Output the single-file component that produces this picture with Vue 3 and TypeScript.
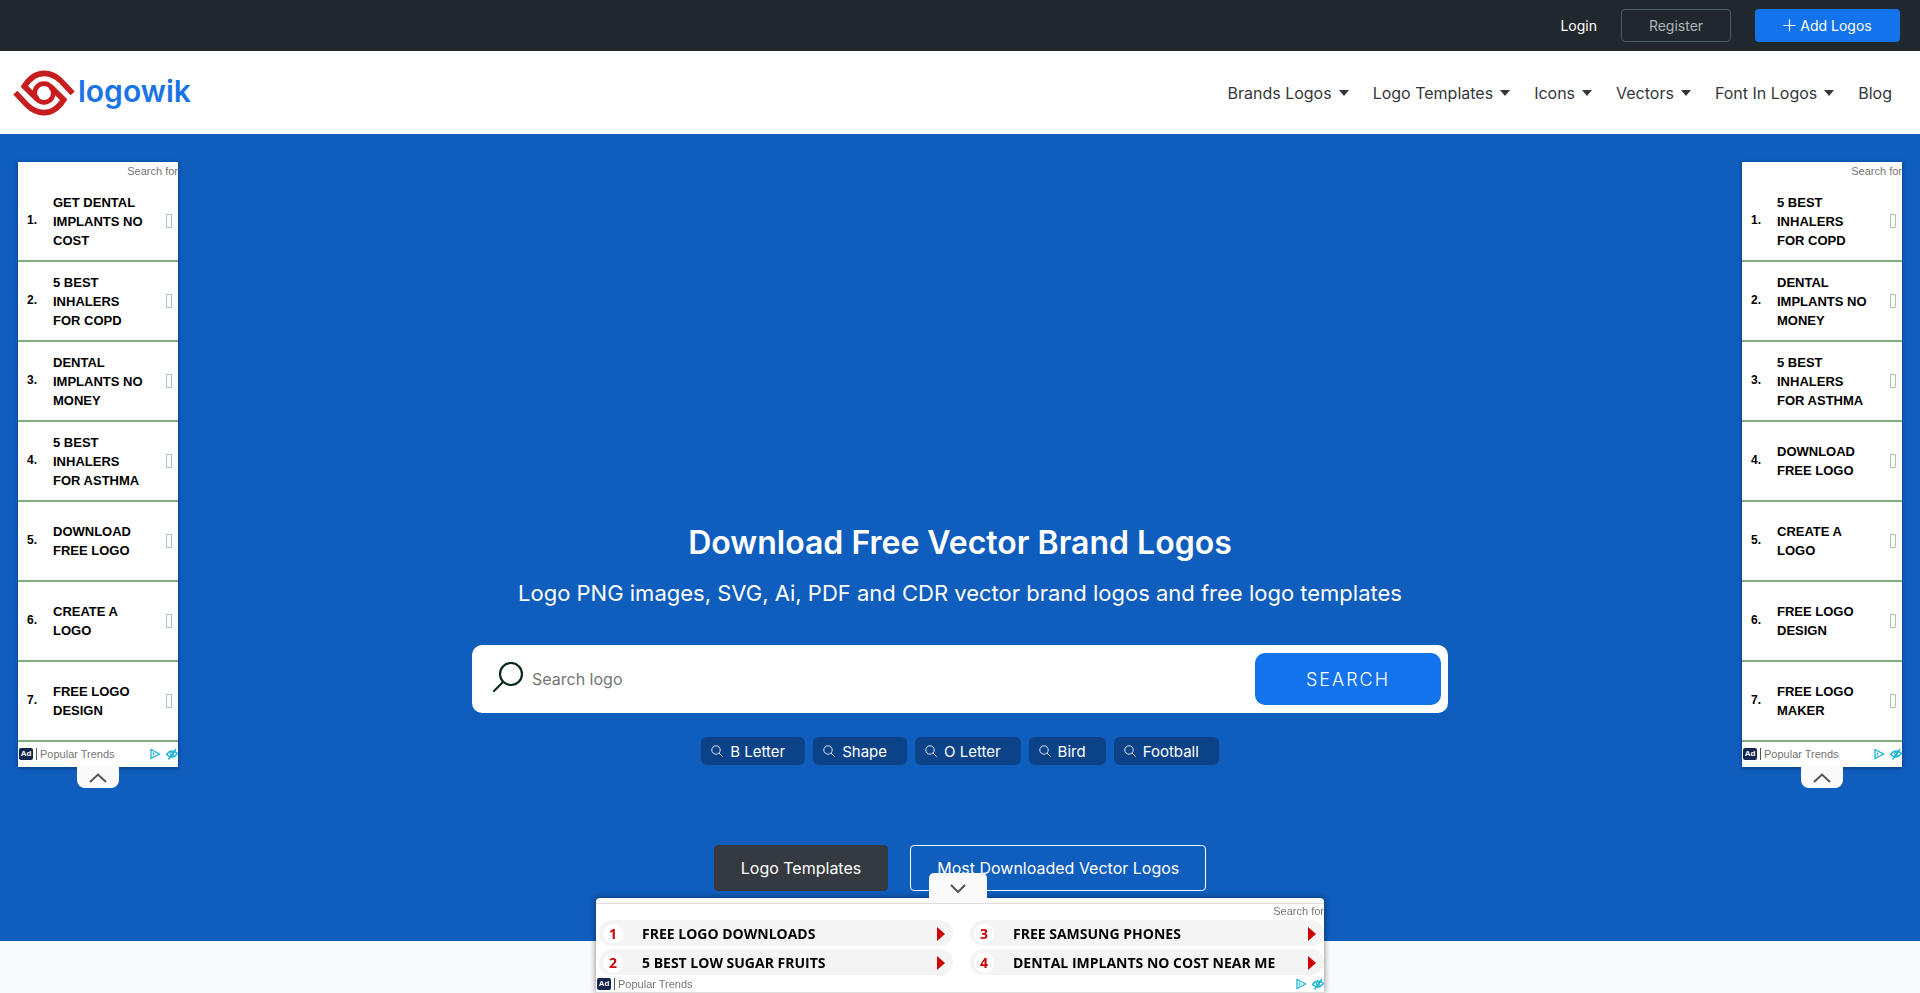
<script setup lang="ts">
interface MenuEntry {
  label: string
  dropdown: boolean
}

interface SideAd {
  side: string
  items: string[]
}

const menu: MenuEntry[] = [
  { label: 'Brands Logos', dropdown: true },
  { label: 'Logo Templates', dropdown: true },
  { label: 'Icons', dropdown: true },
  { label: 'Vectors', dropdown: true },
  { label: 'Font In Logos', dropdown: true },
  { label: 'Blog', dropdown: false },
]

const tags: string[] = ['B Letter', 'Shape', 'O Letter', 'Bird', 'Football']

const sideAds: SideAd[] = [
  {
    side: 'left',
    items: [
      'Get dental implants no cost',
      '5 best inhalers for COPD',
      'Dental implants no money',
      '5 best inhalers for asthma',
      'Download free logo',
      'Create a logo',
      'Free logo design',
    ],
  },
  {
    side: 'right',
    items: [
      '5 best inhalers for COPD',
      'Dental implants no money',
      '5 best inhalers for asthma',
      'Download free logo',
      'Create a logo',
      'Free logo design',
      'Free logo maker',
    ],
  },
]

const bottomAd: string[] = [
  'Free logo downloads',
  '5 best low sugar fruits',
  'Free Samsung phones',
  'Dental implants no cost near me',
]
</script>

<template>
  <div class="page">
    <div class="topbar">
      <a href="#" class="login">Login</a>
      <a href="#" class="top-btn register">Register</a>
      <a href="#" class="top-btn add">
        <svg width="13" height="13" viewBox="0 0 13 13" aria-hidden="true">
          <path d="M6.5 0.5v12M0.5 6.5h12" stroke="#fff" stroke-width="1.2" />
        </svg>
        Add Logos
      </a>
    </div>

    <header class="header">
      <a href="#" class="brand">
        <svg width="64" height="46" viewBox="0 0 192 138" fill="none" stroke="#c81d1f" stroke-width="17" aria-hidden="true">
          <path d="M76 88 L37 49 Q62 10 96 10 Q124 10 146 32 L182 70" />
          <path d="M116 50 L155 89 Q130 128 96 128 Q68 128 46 106 L10 68" />
          <circle cx="96" cy="69" r="28" stroke-width="14" />
        </svg>
        <span>logowik</span>
      </a>
      <nav class="menu">
        <a v-for="entry in menu" :key="entry.label" href="#">
          {{ entry.label }}<i v-if="entry.dropdown" class="caret"></i>
        </a>
      </nav>
    </header>

    <main class="hero">
      <h1>Download Free Vector Brand Logos</h1>
      <p class="subtitle">Logo PNG images, SVG, Ai, PDF and CDR vector brand logos and free logo templates</p>
      <form class="search" @submit.prevent>
        <label for="query">
          <svg width="32" height="32" viewBox="0 0 32 32" fill="none" stroke="#062b16" stroke-width="2.2" stroke-linecap="round" aria-label="Search">
            <circle cx="19" cy="12" r="11" />
            <path d="M11 20 L2 29" />
          </svg>
        </label>
        <input id="query" type="text" placeholder="Search logo" />
        <button type="submit">SEARCH</button>
      </form>
      <div class="tags">
        <a v-for="tag in tags" :key="tag" href="#">
          <svg width="12" height="12" viewBox="0 0 12 12" fill="none" stroke="#d9e6f7" stroke-width="1" aria-hidden="true">
            <circle cx="5" cy="5" r="4.2" />
            <path d="M8 8 L11.6 11.6" />
          </svg>
          {{ tag }}
        </a>
      </div>
      <div class="actions">
        <a href="#" class="action dark">Logo Templates</a>
        <a href="#" class="action outline">Most Downloaded Vector Logos</a>
      </div>
    </main>

    <aside v-for="ad in sideAds" :key="ad.side" class="side-ad" :class="ad.side">
      <div class="ad-head">Search for</div>
      <ol class="side-list">
        <li v-for="(item, i) in ad.items" :key="item">
          <a href="#">
            <span class="num">{{ i + 1 }}.</span>
            <span class="term">{{ item }}</span>
            <span class="box"></span>
          </a>
        </li>
      </ol>
      <div class="ad-foot">
        <span class="ad-badge">Ad</span>
        <span class="trend">Popular Trends</span>
        <svg class="choices" width="28" height="12" viewBox="0 0 28 12" fill="none" stroke="#19b1d6" aria-hidden="true">
          <path d="M1 1.5 L9.5 6 L1 10.5 Z M3.5 4.5 v3" stroke-width="1.3" />
          <path d="M16.5 6.5 Q21.5 0 27.5 5.5 Q22.5 12 16.5 6.5 Z M18.5 11.5 L26 1" stroke-width="1.3" />
          <circle cx="22" cy="6" r="1.8" />
        </svg>
      </div>
      <button type="button" class="tab" aria-label="Collapse">
        <svg width="18" height="10" viewBox="0 0 18 10" fill="none" stroke="#555" stroke-width="2">
          <path d="M1 9 L9 1.5 L17 9" />
        </svg>
      </button>
    </aside>

    <aside class="bottom-ad">
      <button type="button" class="tab" aria-label="Collapse">
        <svg width="16" height="9" viewBox="0 0 16 9" fill="none" stroke="#555" stroke-width="2">
          <path d="M1 1 L8 8 L15 1" />
        </svg>
      </button>
      <div class="ad-head">Search for</div>
      <ol class="bottom-list">
        <li v-for="(item, i) in bottomAd" :key="item">
          <a href="#">
            <span class="disc">{{ i + 1 }}</span>
            <span class="term">{{ item }}</span>
            <i class="arrow"></i>
          </a>
        </li>
      </ol>
      <div class="ad-foot">
        <span class="ad-badge">Ad</span>
        <span class="trend">Popular Trends</span>
        <svg class="choices" width="28" height="12" viewBox="0 0 28 12" fill="none" stroke="#19b1d6" aria-hidden="true">
          <path d="M1 1.5 L9.5 6 L1 10.5 Z M3.5 4.5 v3" stroke-width="1.3" />
          <path d="M16.5 6.5 Q21.5 0 27.5 5.5 Q22.5 12 16.5 6.5 Z M18.5 11.5 L26 1" stroke-width="1.3" />
          <circle cx="22" cy="6" r="1.8" />
        </svg>
      </div>
    </aside>
  </div>
</template>

<style>
body {
  margin: 0;
}
</style>

<style scoped>
.page {
  min-height: 100vh;
  background: #f8fafb;
  color: #212529;
  font-family: Inter, "Liberation Sans", sans-serif;
  font-size: 16px;
}
.page * {
  box-sizing: border-box;
}
a {
  color: inherit;
  text-decoration: none;
}
ol {
  list-style: none;
  margin: 0;
  padding: 0;
}
.topbar {
  display: flex;
  align-items: center;
  justify-content: flex-end;
  gap: 24px;
  height: 51px;
  padding: 0 20px;
  background: #20282d;
  color: #fff;
  font-size: 14px;
}
.top-btn {
  display: flex;
  align-items: center;
  justify-content: center;
  gap: 4px;
  height: 33px;
  border-radius: 4px;
}
.register {
  width: 110px;
  border: 1px solid #4b5d63;
  color: #aeb5b9;
}
.add {
  width: 145px;
  background: #1273eb;
}
.header {
  display: flex;
  align-items: center;
  justify-content: space-between;
  height: 83px;
  padding: 0 28px 0 12px;
  background: #fff;
}
.brand {
  display: flex;
  align-items: center;
  gap: 2px;
  color: #1b74e4;
  font-size: 30px;
  font-weight: 600;
  line-height: 36px;
}
.brand span {
  padding-bottom: 4px;
}
.menu {
  display: flex;
  gap: 24px;
  color: #33373b;
}
.menu a {
  display: flex;
  align-items: center;
  gap: 7px;
}
.caret {
  border: 5px solid transparent;
  border-top: 6px solid #33373b;
  border-bottom: 0;
}
.hero {
  display: flex;
  flex-direction: column;
  align-items: center;
  min-height: 807px;
  padding-top: 384px;
  background: #0f5dbd;
  color: #fff;
}
h1 {
  margin: 0;
  font-size: 32px;
  font-weight: 600;
  line-height: 50px;
}
.subtitle {
  margin: 8px 0 0;
  font-size: 22px;
  line-height: 34px;
}
.search {
  display: flex;
  align-items: center;
  width: 100%;
  max-width: 976px;
  height: 68px;
  margin-top: 35px;
  padding: 0 7px 0 20px;
  border-radius: 10px;
  background: #fff;
}
.search label {
  padding-bottom: 2px;
}
.search svg {
  display: block;
}
.search input {
  flex: 1;
  min-width: 0;
  padding: 0 8px;
  border: 0;
  outline: 0;
  background: none;
  font: 16px Inter, sans-serif;
}
.search input::placeholder {
  color: #757575;
}
.search button {
  width: 186px;
  height: 52px;
  border: 0;
  border-radius: 10px;
  background: #1273eb;
  color: #fff;
  font: 300 18px Inter, sans-serif;
  letter-spacing: 2px;
}
.tags {
  display: flex;
  gap: 8px;
  margin-top: 24px;
}
.tags a {
  display: flex;
  align-items: center;
  gap: 7px;
  height: 28px;
  padding: 0 20px 0 10px;
  border-radius: 6px;
  background: #0b4288;
  font-size: 15px;
}
.actions {
  display: flex;
  gap: 22px;
  margin-top: 80px;
}
.action {
  padding: 0 26px;
  border: 1px solid #fff;
  border-radius: 4px;
  line-height: 44px;
}
.dark {
  border-color: #343a40;
  background: #343a40;
}
.side-ad {
  position: absolute;
  top: 162px;
  width: 160px;
  background: #fff;
  box-shadow: 0 1px 4px rgba(0, 0, 0, 0.35);
  font-family: "Liberation Sans", sans-serif;
}
.left {
  left: 18px;
}
.right {
  right: 18px;
}
.ad-head {
  color: #757575;
  font: 11px/19px "Liberation Sans", sans-serif;
  text-align: right;
}
.side-ad .ad-head {
  height: 20px;
}
.side-list a {
  display: flex;
  align-items: center;
  height: 80px;
  padding: 0 6px 0 9px;
  border-bottom: 2px solid #82ab82;
  color: #000;
  font-size: 13px;
  font-weight: 700;
  line-height: 19px;
  text-transform: uppercase;
}
.num {
  width: 26px;
  padding-bottom: 1px;
  font-size: 12px;
}
.side-list .term {
  width: 96px;
}
.box {
  width: 6px;
  height: 14px;
  margin-left: auto;
  border: 1px solid #a9c9ad;
}
.ad-foot {
  display: flex;
  align-items: center;
  color: #757575;
  font: 11px/12px "Liberation Sans", sans-serif;
}
.side-ad .ad-foot {
  height: 25px;
  padding: 0 0 1px 1px;
}
.ad-badge {
  width: 14px;
  border-radius: 2px;
  background: #14264f;
  color: #fff;
  font-size: 8px;
  font-weight: 700;
  text-align: center;
}
.trend {
  margin-left: 3px;
  padding-left: 3px;
  border-left: 1px solid #555;
}
.choices {
  margin-left: auto;
}
.tab {
  position: absolute;
  display: flex;
  align-items: center;
  justify-content: center;
  padding: 0;
  border: 0;
  background: #fafafa;
}
.side-ad .tab {
  top: 100%;
  left: 59px;
  width: 42px;
  height: 21px;
  border-radius: 0 0 8px 8px;
}
.bottom-ad {
  position: fixed;
  bottom: 0;
  left: 50%;
  width: 728px;
  height: 95px;
  margin-left: -364px;
  border-top: 5px solid #fafafa;
  border-radius: 4px 4px 0 0;
  background: #fff;
  box-shadow: 0 0 6px rgba(0, 0, 0, 0.5);
}
.bottom-ad .tab {
  bottom: 100%;
  left: 333px;
  width: 58px;
  height: 30px;
  border-radius: 5px 5px 0 0;
}
.bottom-ad .ad-head {
  height: 17px;
  border-top: 1px solid #ddd;
  line-height: 15px;
}
.bottom-list {
  display: grid;
  grid-template: 26px 26px / 1fr 1fr;
  grid-auto-flow: column;
  gap: 3px 17px;
  padding-left: 3px;
}
.bottom-list a {
  display: flex;
  align-items: center;
  height: 26px;
  padding: 1px 8px 0 4px;
  border-radius: 13px;
  background: #f4f4f4;
  color: #000;
  font: 700 14px/25px "Open Sans", sans-serif;
  text-transform: uppercase;
}
.disc {
  width: 20px;
  height: 20px;
  margin-right: 19px;
  border-radius: 10px;
  background: #fff;
  color: #c00;
  line-height: 20px;
  text-align: center;
}
.arrow {
  margin-left: auto;
  border: 7px solid transparent;
  border-left: 8px solid #c00;
  border-right: 0;
}
.bottom-ad .ad-foot {
  height: 18px;
  padding-left: 1px;
  border-bottom: 1px solid #ddd;
}
</style>
